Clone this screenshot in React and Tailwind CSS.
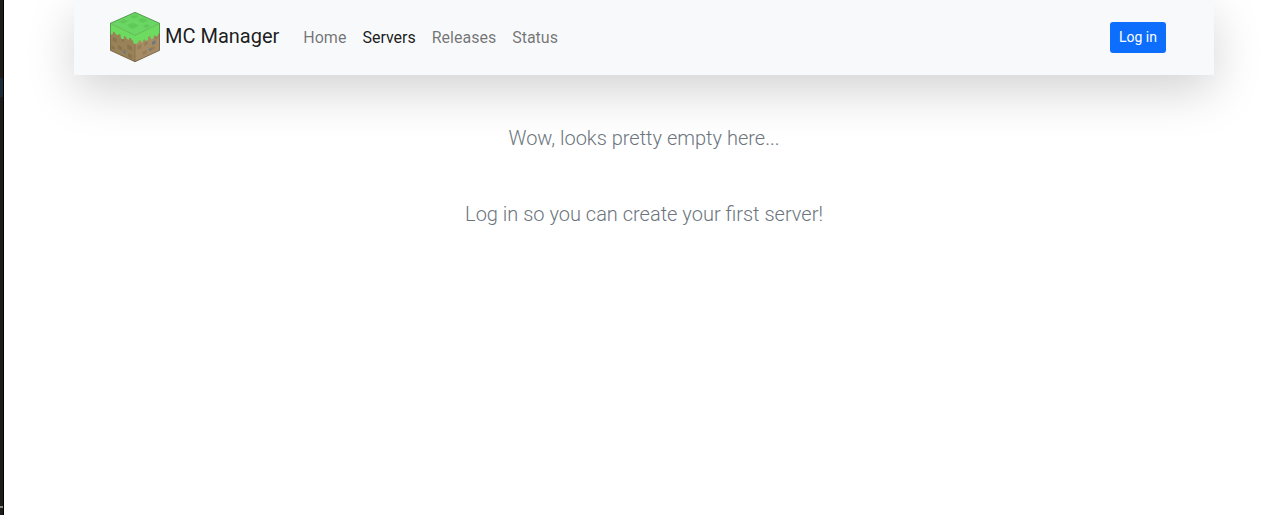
const links = [
  { label: "Home", active: false },
  { label: "Servers", active: true },
  { label: "Releases", active: false },
  { label: "Status", active: false },
];

function GrassBlock() {
  return (
    <svg viewBox="0 0 150 150" className="size-[50px] shrink-0" aria-hidden="true">
      <path d="M0 34 75 70V150L0 115Z" fill="#998258" />
      <path d="M75 70 150 34V115L75 150Z" fill="#a58c64" />
      <path
        d="M8 75 20 81V92L8 86ZM24 99 36 105V116L24 110ZM52 97 66 104V116L52 110ZM4 100 14 105V114L4 109ZM54 123 66 129V140L54 134ZM34 79 42 83V91L34 87Z"
        fill="#8a744e"
      />
      <path
        d="M82 102 94 96V108L82 114ZM103 91 113 86V97L103 102ZM98 119 110 113V124L98 130ZM134 72 144 67V78L134 83ZM122 107 134 101V111L122 117Z"
        fill="#977e58"
      />
      <path d="M39 112 47 116V126L39 122ZM126 89 137 84V95L126 100ZM117 110 124 107V115L117 118Z" fill="#76777d" />
      <path
        d="M0 34 75 70 150 34V67L145 64 143 72 137 75V70L131 72V79L125 82 121 78V72L114 75V84L108 87 104 82 99 85V91L92 90V84L86 87 84 94 76 96 70 94V87L65 84 63 79 57 77V84L50 80 47 74 42 72V80L36 82 32 77V69L26 66 23 70 17 67 14 61 9 59V65L4 68 0 65Z"
        fill="#6cdb60"
      />
      <path d="M75 1 149 34 75 70 1 34Z" fill="#6bd663" />
      <path
        d="M61 13 77 8 86 13 71 20ZM85 22 98 17 115 25 99 33 87 28ZM26 29 42 22 54 28 39 35ZM51 39 69 32 86 40 71 50 59 48ZM97 43 110 36 121 41 108 49Z"
        fill="#61c95a"
      />
      <path d="M1 34 75 70 149 34" fill="none" stroke="#4ba344" strokeWidth="1.5" />
      <path d="M75 96V149" stroke="#7d694a" strokeWidth="2" />
      <path d="M1 66V34L75 1 149 34V66" fill="none" stroke="#4b8b46" strokeWidth="2.5" strokeLinejoin="round" />
      <path d="M1 66V115L75 149 149 115V66" fill="none" stroke="#736247" strokeWidth="2.5" strokeLinejoin="round" />
    </svg>
  );
}

export default function App() {
  return (
    <div className="flex min-h-screen bg-white font-[Roboto,sans-serif]">
      <div aria-hidden="true" className="flex w-1 shrink-0 flex-col border-r border-black bg-[#1e1c19]">
        <div className="mt-[78px] h-[19px] bg-[#1d2b36]" />
        <div className="mt-auto mb-[7px] h-0.5 bg-[#8a8a88]" />
      </div>
      <div className="min-w-0 flex-1 overflow-hidden">
        <div className="mx-auto max-w-[1140px]">
          <header className="bg-[#f8f9fb] pt-3 pr-12 pb-[13px] pl-9 shadow-[0_16px_48px_rgba(0,0,0,0.175)]">
            <nav className="flex flex-wrap items-center">
              <a href="#" className="mr-4 flex items-center gap-[5px] text-xl text-black/90">
                <GrassBlock />
                <span className="pb-0.5">MC Manager</span>
              </a>
              <ul className="flex flex-wrap pt-0.5">
                {links.map(({ label, active }) => (
                  <li key={label}>
                    <a
                      href="#"
                      aria-current={active ? "page" : undefined}
                      className={active ? "block px-2 text-base text-black/90" : "block px-2 text-base text-black/55"}
                    >
                      {label}
                    </a>
                  </li>
                ))}
              </ul>
              <button
                type="button"
                className="ml-auto h-[31px] rounded-[3px] bg-[#0d6efd] px-[9px] text-sm text-white"
              >
                Log in
              </button>
            </nav>
          </header>
          <main className="relative flex flex-col gap-[46px] px-3 pt-12 text-center text-xl leading-[30px] font-light text-[#6c757d]">
            <p>Wow, looks pretty empty here...</p>
            <p>Log in so you can create your first server!</p>
          </main>
        </div>
      </div>
    </div>
  );
}
